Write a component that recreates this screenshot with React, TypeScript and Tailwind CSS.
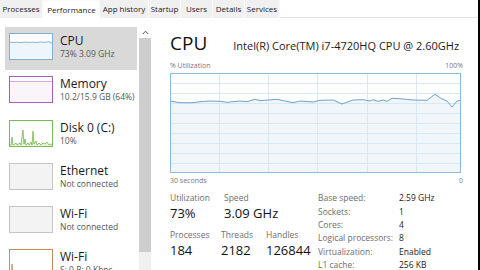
import React from "react";

const cpuPts: [number, number][] = [
  [0, 28], [10, 29.7], [23, 29.7], [30, 28.7], [40, 28], [50, 28.3], [57, 29.3], [70, 28], [77, 28.7], [85, 26.3], [90, 27.7], [107, 26.3], [123, 29.7], [130, 28], [143, 29], [150, 27.3], [163, 27], [172, 31], [183, 27], [193, 26.7], [200, 28], [203, 26.7], [208, 28.3], [213, 27], [217, 28.3], [222, 25.3], [230, 25.7], [243, 27], [257, 27.3], [265, 21.3], [272, 26], [277, 28], [282, 34], [287, 28], [291, 27.3],
];

function MainGraph() {
  const W = 291;
  const H = 100;
  const line = cpuPts.map((p) => `${p[0]},${p[1]}`).join(" ");
  const area = `0,${H} ${line} ${W},${H}`;
  const vx = [49, 98, 147, 197, 246];
  const hy = [10, 20, 30, 40, 50, 60, 70, 80, 90];
  return (
    <svg width={W} height={H} viewBox={`0 0 ${W} ${H}`} className="block">
      <rect x="0" y="0" width={W} height={H} fill="#ffffff" />
      <polygon points={area} fill="#f1f6fb" />
      {vx.map((x) => (
        <line key={"v" + x} x1={x + 0.5} y1={0} x2={x + 0.5} y2={H} stroke="#d9e8f3" strokeWidth="1" />
      ))}
      {hy.map((y) => (
        <line key={"h" + y} x1={0} y1={y + 0.5} x2={W} y2={y + 0.5} stroke="#d9e8f3" strokeWidth="1" />
      ))}
      <polyline points={line} fill="none" stroke="#6fa3c8" strokeWidth="1" />
      <rect x="0.5" y="0.5" width={W - 1} height={H - 1} fill="none" stroke="#8cbad8" strokeWidth="1" />
    </svg>
  );
}

type Thumb = "cpu" | "mem" | "disk" | "none" | "wifi";

function Thumbnail({ kind }: { kind: Thumb }) {
  const W = 44;
  const H = 27;
  let border = "#c4c4c4";
  let bg = "#f3f3f3";
  let content: React.ReactNode = null;
  if (kind === "cpu") {
    border = "#7fb1d3";
    bg = "#ffffff";
    const pts = "0,9 4,9.5 8,9.2 12,9.6 16,9.1 20,9.4 24,9.2 28,9.5 32,9 36,9.3 40,8.6 42,10 44,9";
    content = (
      <>
        <polygon points={`0,${H} ${pts} ${W},${H}`} fill="#eef5fb" />
        <polyline points={pts} fill="none" stroke="#6fa3c8" strokeWidth="0.8" />
      </>
    );
  } else if (kind === "mem") {
    border = "#a461b8";
    bg = "#ffffff";
    content = (
      <>
        <rect x="0" y="5" width={W} height={H - 5} fill="#faf5fb" />
        <line x1="0" y1="5.5" x2={W} y2="5.5" stroke="#c79bd4" strokeWidth="0.8" />
      </>
    );
  } else if (kind === "disk") {
    border = "#7cb855";
    bg = "#ffffff";
    const pts =
      "0,26 2,25 3,17 4,25 6,24 7,23 8,25 11,23 12,25 14,10 15,24 16,19 17,25 19,23 20,25 22,22 23,25 24,11 25,24 27,21 28,25 30,23 32,25 34,23 36,24 38,22 40,25 42,24 44,25";
    content = (
      <>
        <polygon points={`0,${H} ${pts} ${W},${H}`} fill="#e9f4e0" />
        <polyline points={pts} fill="none" stroke="#6aaa3d" strokeWidth="0.7" />
      </>
    );
  } else if (kind === "wifi") {
    border = "#c98a5a";
    bg = "#ffffff";
    const pts = "0,27 2,26 3,15 4,26 8,27 12,25 13,21 14,26 44,27";
    content = <polyline points={pts} fill="none" stroke="#c47a3c" strokeWidth="0.7" />;
  }
  return (
    <svg width={W} height={H} viewBox={`0 0 ${W} ${H}`} className="block shrink-0">
      <rect x="0" y="0" width={W} height={H} fill={bg} />
      {content}
      <rect x="0.5" y="0.5" width={W - 1} height={H - 1} fill="none" stroke={border} strokeWidth="1" />
    </svg>
  );
}

function SideItem({ kind, title, sub, selected }: { kind: Thumb; title: string; sub: string; selected?: boolean }) {
  return (
    <div className={`h-[43.3px] shrink-0 flex items-start pl-[4px] pt-[6px] ${selected ? "bg-[#d9d9d9]" : ""}`}>
      <Thumbnail kind={kind} />
      <div className="ml-[7px] flex flex-col">
        <div className="text-[12px] leading-[15px] text-[#1a1a1a]">{title}</div>
        <div className="text-[8.5px] leading-[12px] text-[#555] whitespace-nowrap">{sub}</div>
      </div>
    </div>
  );
}

const tabs: { name: string; w: number }[] = [
  { name: "Processes", w: 43 },
  { name: "Performance", w: 57 },
  { name: "App history", w: 49 },
  { name: "Startup", w: 32 },
  { name: "Users", w: 32 },
  { name: "Details", w: 32 },
  { name: "Services", w: 35 },
];

function Detail({ k, v }: { k: string; v: string }) {
  return (
    <div className="flex h-[13.4px] shrink-0 items-center">
      <div className="w-[81px] text-[8.5px] text-[#6e6e6e] whitespace-nowrap">{k}</div>
      <div className="text-[8.5px] text-[#1a1a1a] whitespace-nowrap">{v}</div>
    </div>
  );
}

export default function App() {
  return (
    <div className="w-[480px] h-[270px] overflow-hidden bg-white flex flex-col border-r-2 border-black font-['Open_Sans',sans-serif]">
      {/* Tab bar */}
      <div className="h-[18px] flex shrink-0 border-b border-[#e3e3e3]">
        {tabs.map((t) => {
          const sel = t.name === "Performance";
          return (
            <div
              key={t.name}
              style={{ width: t.w }}
              className={`h-[18px] flex items-center justify-center text-[8px] text-[#222] whitespace-nowrap border-r border-[#fafafa] ${
                sel ? "bg-white border-x border-t border-[#dcdcdc] -mb-[1px] h-[19px]" : "bg-[#f0f0f0]"
              }`}
            >
              {t.name}
            </div>
          );
        })}
      </div>

      <div className="flex flex-1 min-h-0">
        {/* Sidebar */}
        <div className="w-[137px] shrink-0 pt-[9px] pl-[5px] flex flex-col">
          <SideItem kind="cpu" title="CPU" sub="73%  3.09 GHz" selected />
          <SideItem kind="mem" title="Memory" sub="10.2/15.9 GB (64%)" />
          <SideItem kind="disk" title="Disk 0 (C:)" sub="10%" />
          <SideItem kind="none" title="Ethernet" sub="Not connected" />
          <SideItem kind="none" title="Wi-Fi" sub="Not connected" />
          <SideItem kind="wifi" title="Wi-Fi" sub="S: 0 R: 0 Kbps" />
        </div>

        {/* Scrollbar */}
        <div className="w-[12px] ml-[2px] mt-[9px] shrink-0 flex flex-col bg-[#f0f0f0]">
          <div className="h-[11px] flex items-center justify-center bg-white">
            <svg width="7" height="5" viewBox="0 0 7 5">
              <polyline points="0.8,4 3.5,1.2 6.2,4" fill="none" stroke="#555" strokeWidth="1" />
            </svg>
          </div>
          <div className="h-[214px] bg-[#cdcdcd]" />
        </div>

        {/* Main */}
        <div className="flex-1 min-w-0 pl-[19px] pr-[15px] pt-[13px] flex flex-col">
          <div className="flex items-baseline">
            <div className="text-[19px] leading-[24px] text-[#111]">CPU</div>
            <div className="ml-[26px] text-[11px] text-[#1a1a1a] whitespace-nowrap">Intel(R) Core(TM) i7-4720HQ CPU @ 2.60GHz</div>
          </div>
          <div className="flex justify-between mt-[6px] text-[7px] leading-[10px] text-[#777]">
            <span>% Utilization</span>
            <span>100%</span>
          </div>
          <div className="mt-[2px]">
            <MainGraph />
          </div>
          <div className="flex justify-between text-[7px] leading-[12px] text-[#777] mt-[2px]">
            <span>30 seconds</span>
            <span>0</span>
          </div>

          <div className="flex mt-[5px]">
            <div className="w-[148px] flex flex-col">
              <div className="flex">
                <div className="w-[54px]">
                  <div className="text-[8.5px] leading-[12px] text-[#6e6e6e]">Utilization</div>
                  <div className="text-[13px] leading-[18px] text-[#111]">73%</div>
                </div>
                <div>
                  <div className="text-[8.5px] leading-[12px] text-[#6e6e6e]">Speed</div>
                  <div className="text-[13px] leading-[18px] text-[#111] whitespace-nowrap">3.09 GHz</div>
                </div>
              </div>
              <div className="flex mt-[7px]">
                <div className="w-[51px]">
                  <div className="text-[8.5px] leading-[12px] text-[#6e6e6e]">Processes</div>
                  <div className="text-[13px] leading-[18px] text-[#111]">184</div>
                </div>
                <div className="w-[45px]">
                  <div className="text-[8.5px] leading-[12px] text-[#6e6e6e]">Threads</div>
                  <div className="text-[13px] leading-[18px] text-[#111]">2182</div>
                </div>
                <div>
                  <div className="text-[8.5px] leading-[12px] text-[#6e6e6e]">Handles</div>
                  <div className="text-[13px] leading-[18px] text-[#111]">126844</div>
                </div>
              </div>
              <div className="mt-[10px] text-[8.5px] leading-[12px] text-[#6e6e6e]">Up time</div>
            </div>
            <div className="flex flex-col">
              <Detail k="Base speed:" v="2.59 GHz" />
              <Detail k="Sockets:" v="1" />
              <Detail k="Cores:" v="4" />
              <Detail k="Logical processors:" v="8" />
              <Detail k="Virtualization:" v="Enabled" />
              <Detail k="L1 cache:" v="256 KB" />
            </div>
          </div>
        </div>
      </div>
    </div>
  );
}
